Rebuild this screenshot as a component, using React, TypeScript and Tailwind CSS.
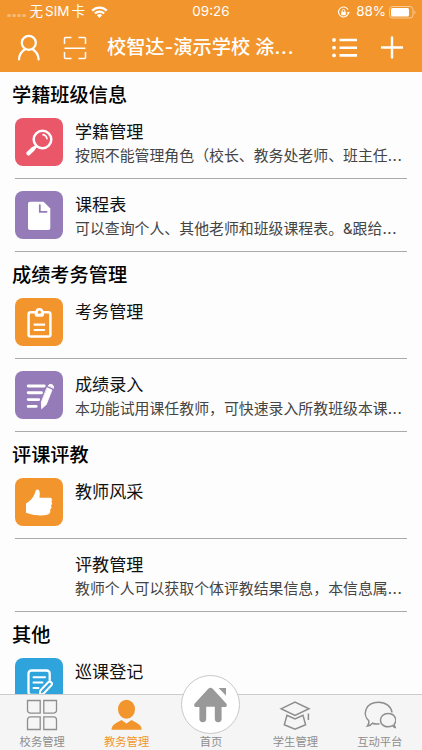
import type { ReactNode } from "react";

interface Item {
  title: string;
  desc?: string;
  color?: string;
  icon?: ReactNode;
}

interface Section {
  name: string;
  items: Item[];
}

const SearchIcon = () => (
  <svg viewBox="0 0 48 48" fill="none" stroke="#fff" strokeLinecap="round">
    <circle cx="27.5" cy="21.5" r="8.8" strokeWidth="2.5" />
    <path d="M28 16.6a5 5 0 0 1 4 4" strokeWidth="1.6" />
    <path d="M21.2 28l-2.4 2.4" strokeWidth="2.8" />
    <path d="M18.3 30.8L13.4 35.4" strokeWidth="4.2" />
  </svg>
);

const FileIcon = () => (
  <svg viewBox="0 0 48 48" fill="none">
    <path d="M15 10.7H28.6L35.3 17.4V37a2 2 0 0 1-2 2H15a2 2 0 0 1-2-2V12.7a2 2 0 0 1 2-2z" fill="#fff" />
    <path d="M24.8 14.2V20.8H31.6" stroke="#957bb8" strokeWidth="1.8" strokeLinecap="round" />
  </svg>
);

const ClipboardIcon = () => (
  <svg viewBox="0 0 48 48" fill="none" stroke="#fff" strokeLinecap="round">
    <rect x="13.6" y="14.2" width="21.8" height="24.2" rx="2" strokeWidth="2.5" />
    <path d="M19.7 13h9.3v3.8a2 2 0 0 1-2 2h-5.3a2 2 0 0 1-2-2z" fill="#fff" stroke="none" />
    <circle cx="24.4" cy="14" r="4" fill="#fff" stroke="none" />
    <circle cx="24.4" cy="14.2" r="1.6" fill="#f2952c" stroke="none" />
    <path d="M19.6 26.7h9.6M19.6 32h9.6" strokeWidth="2.2" />
  </svg>
);

const ScoreIcon = () => (
  <svg viewBox="0 0 48 48" fill="none" stroke="#fff" strokeLinecap="round">
    <path d="M13.2 15h16M13.2 21.8h13.3M13.2 28.6h10.5M13.2 35.4h8" strokeWidth="2.9" />
    <path d="M32.2 16.8L37 19 31.3 33.5 26.6 37.7 26.4 31.2z" fill="#fff" strokeWidth="0.8" strokeLinejoin="round" />
    <path d="M33.2 14.6a3 3 0 0 1 5.4 2.4z" fill="#fff" strokeWidth="0.8" />
  </svg>
);

const ThumbIcon = () => (
  <svg viewBox="0 0 48 48" fill="#fff">
    <path d="M11 25.4C14.5 23.5 18.2 20 19.8 15.5 20.3 13.5 20.8 11.3 22.5 11.4 25 11.6 25 14.5 24.5 19.8H35.2C37 19.8 37.5 22 36.3 23.4 37.6 24.6 37.3 26.7 35.9 27.5 36.9 28.9 36.5 30.9 35 31.6 35.9 33.6 35 35.8 32.8 36.4 28 37.9 21 37.5 18 36.8 15.5 36.2 13 35.5 11 34.8z" />
  </svg>
);

const NoteIcon = () => (
  <svg viewBox="0 0 48 48" fill="none" stroke="#fff" strokeLinecap="round" strokeLinejoin="round">
    <path d="M34.7 22V15.5a3 3 0 0 0-3-3H16.5a3 3 0 0 0-3 3V34a3 3 0 0 0 3 3H22" strokeWidth="2.3" />
    <path d="M18.5 19.3h11.5M18.5 24.6h9M18.5 30h5" strokeWidth="2" />
    <path d="M33.2 24.3a2.2 2.2 0 0 1 3.2 3L28.7 35.5 24.6 37 25.4 32.5z" strokeWidth="2" />
  </svg>
);

const sections: Section[] = [
  {
    name: "学籍班级信息",
    items: [
      {
        title: "学籍管理",
        desc: "按照不能管理角色（校长、教务处老师、班主任",
        color: "bg-[#e95769]",
        icon: <SearchIcon />,
      },
      {
        title: "课程表",
        desc: "可以查询个人、其他老师和班级课程表。&跟给",
        color: "bg-[#957bb8]",
        icon: <FileIcon />,
      },
    ],
  },
  {
    name: "成绩考务管理",
    items: [
      { title: "考务管理", color: "bg-[#f2952c]", icon: <ClipboardIcon /> },
      {
        title: "成绩录入",
        desc: "本功能试用课任教师，可快速录入所教班级本课",
        color: "bg-[#957bb8]",
        icon: <ScoreIcon />,
      },
    ],
  },
  {
    name: "评课评教",
    items: [
      { title: "教师风采", color: "bg-[#f2952c]", icon: <ThumbIcon /> },
      {
        title: "评教管理",
        desc: "教师个人可以获取个体评教结果信息，本信息属",
      },
    ],
  },
  {
    name: "其他",
    items: [{ title: "巡课登记", color: "bg-[#2fa4dc]", icon: <NoteIcon /> }],
  },
];

function StatusBar() {
  return (
    <div className="relative flex h-6 items-center justify-between pl-[7px] pr-[6px] text-[13.5px] leading-none">
      <div className="flex items-center">
        <div className="mt-[6px] mr-[4px] flex gap-[1.5px]">
          {[0, 1, 2, 3].map((i) => (
            <span key={i} className="h-[3px] w-[3.5px] rounded-full bg-white/35" />
          ))}
        </div>
        <span className="flex gap-[2px]">
          <span>无</span>
          <span>SIM</span>
          <span>卡</span>
        </span>
        <svg className="ml-[6px] h-[12px] w-[17px]" viewBox="0 0 17 12" fill="none" stroke="#fff" strokeWidth="2.2">
          <path d="M1.2 4.6a10.3 10.3 0 0 1 14.6 0" />
          <path d="M3.9 7.5a6.5 6.5 0 0 1 9.2 0" />
          <path d="M8.5 12L5.9 9.3a3.7 3.7 0 0 1 5.2 0z" fill="#fff" stroke="none" />
        </svg>
      </div>
      <span className="absolute inset-x-0 text-center">09:26</span>
      <div className="flex items-center">
        <svg className="mr-[6px] h-[13px] w-[13px]" viewBox="0 0 13 13" fill="none" stroke="#fff">
          <path d="M11 3.8a5 5 0 1 0 .5 2.6" strokeWidth="1.1" />
          <path d="M9.7 6h3.2L11.5 8.2z" fill="#fff" stroke="none" />
          <rect x="4.2" y="5.8" width="4.6" height="3.4" fill="#fff" stroke="none" />
          <path d="M5.2 6V4.8a1.3 1.3 0 0 1 2.6 0V6" strokeWidth="0.9" />
        </svg>
        <span className="tracking-[-0.1px]">88%</span>
        <svg className="ml-[3px] h-[13px] w-[27px]" viewBox="0 0 27 13" fill="none">
          <rect x="0.5" y="0.5" width="23.5" height="11.5" rx="3" stroke="#fff" strokeOpacity="0.5" />
          <rect x="2" y="2" width="18" height="8.5" rx="1.5" fill="#fff" />
          <path d="M25.4 4.5v3.8c1.4-.6 1.4-3.2 0-3.8z" fill="#fff" fillOpacity="0.5" />
        </svg>
      </div>
    </div>
  );
}

function Header() {
  return (
    <header className="h-[72px] shrink-0 bg-[#f2952c] text-white">
      <StatusBar />
      <div className="flex h-12 items-center pl-[17px] pr-[18px]">
        <svg className="h-7 w-6" viewBox="0 0 24 28" fill="none" stroke="#fff" strokeWidth="2.2" strokeLinecap="round">
          <circle cx="11.8" cy="8.8" r="7" />
          <path d="M2 25.5C2.3 20.5 4.6 17.3 8 15.3M21.6 25.5C21.3 20.5 19 17.3 15.6 15.3" />
        </svg>
        <svg className="ml-[22px] h-6 w-6" viewBox="0 0 24 24" fill="none" stroke="#fff" strokeWidth="1.5">
          <path d="M8.5 1.5H2.5a1 1 0 0 0-1 1V8M15.5 1.5h6a1 1 0 0 1 1 1V8M1.5 16v5.5a1 1 0 0 0 1 1h6M22.5 16v5.5a1 1 0 0 1-1 1h-6M1.5 12.2h21" />
        </svg>
        <h1 className="ml-[20px] flex-1 whitespace-nowrap text-[19.2px] font-medium leading-none">
          校智达-演示学校 涂<span className="tracking-[0.8px]">...</span>
        </h1>
        <svg className="h-5 w-[25px]" viewBox="0 0 25 20" fill="none" stroke="#fff" strokeWidth="2.6">
          <path d="M7.5 2H25M7.5 9.7H25M7.5 17.4H25" />
          <g fill="#fff" stroke="none">
            <circle cx="2" cy="2" r="1.9" />
            <circle cx="2" cy="9.7" r="1.9" />
            <circle cx="2" cy="17.4" r="1.9" />
          </g>
        </svg>
        <svg className="ml-[23px] h-6 w-6" viewBox="0 0 24 24" stroke="#fff" strokeWidth="2.4">
          <path d="M1 11.5h22M12 .5v22" />
        </svg>
      </div>
    </header>
  );
}

function Row({ item }: { item: Item }) {
  return (
    <div className="mx-[15px] flex h-[73px] border-b border-[#aaa] pt-3">
      <div className={`h-12 w-12 shrink-0 overflow-hidden rounded-[8px] ${item.color ?? ""}`}>{item.icon}</div>
      <div className="ml-3 whitespace-nowrap pt-[3px]">
        <h3 className="text-[17.1px] leading-[22px] text-[#111]">{item.title}</h3>
        {item.desc && (
          <p className="mt-[2px] text-[14.9px] leading-[22px] text-[#444]">
            {item.desc}
            <span className="tracking-[0.6px]">...</span>
          </p>
        )}
      </div>
    </div>
  );
}

function Tab({ label, active, children }: { label: string; active?: boolean; children?: ReactNode }) {
  return (
    <div className={`flex flex-1 flex-col items-center ${active ? "text-[#f2952c]" : "text-[#8e8e8e]"}`}>
      <div className="flex h-[39px] items-end justify-center pb-[3px]">{children}</div>
      <span className="text-[11.3px] leading-[16px]">{label}</span>
    </div>
  );
}

function TabBar() {
  return (
    <nav className="relative flex h-14 shrink-0 border-t border-[#ccc] bg-[#f5f5f5]">
      <Tab label="校务管理">
        <svg className="h-8 w-8" viewBox="0 0 32 32" fill="none" stroke="currentColor" strokeWidth="1.3">
          <path d="M1.5 1.5H14.2V14.2H4.5a3 3 0 0 1-3-3zM17.8 1.5H30.5V11.2a3 3 0 0 1-3 3H17.8zM4.5 17.8H14.2V30.5H1.5V20.8a3 3 0 0 1 3-3zM17.8 17.8H27.5a3 3 0 0 1 3 3V30.5H17.8z" />
        </svg>
      </Tab>
      <Tab label="教务管理" active>
        <svg className="h-8 w-8" viewBox="0 0 32 32" fill="currentColor">
          <ellipse cx="15.5" cy="10.3" rx="8.5" ry="9.5" />
          <path d="M.5 30.7C.8 25.5 4.5 24.5 10.5 21L15.5 24.5 20.5 21C26.5 24.5 30.5 25.5 30.7 30.7z" />
        </svg>
      </Tab>
      <Tab label="首页" />
      <Tab label="学生管理">
        <svg className="h-8 w-8" viewBox="0 0 32 32" fill="none" stroke="currentColor" strokeWidth="1.5">
          <path d="M2 9.8L16 3 30 9.8 16 16.5z" />
          <path d="M8 16.2L5.3 25.8 16 30.2 26.6 25.8 24 16.2 16 20z" />
          <path d="M29.4 14.5V21" />
        </svg>
      </Tab>
      <Tab label="互动平台">
        <svg className="h-8 w-8" viewBox="0 0 32 32" fill="none" stroke="currentColor" strokeWidth="1.5">
          <path d="M15.5 24.8C12.5 25.3 10 24.8 8.5 24.2 7.5 25.8 6 26.7 3.5 27 4.8 25.5 5.2 23.8 4.8 21.8-1.5 16.5.5 3.2 14.5 3.2 22 3.2 27.2 7.5 28 13.5" />
          <path d="M31.3 28.5C30 28.2 29.2 27.5 28.7 26.6 22.5 29.5 16.5 26.5 16.5 21 16.5 17.5 19.5 14.5 24 14.5 31.5 14.5 33.5 21.5 30.2 25.2 30.2 26.5 30.6 27.5 31.3 28.5z" />
        </svg>
      </Tab>
      {/* raised home button */}
      <div className="absolute left-[181px] top-[-20px] flex h-[59px] w-[59px] items-center justify-center rounded-full border border-[#c8c8c8] bg-white">
        <svg className="h-9 w-9" viewBox="0 0 36 36" fill="#999">
          <path d="M15.3 1.8Q17.5-.4 19.7 1.8L33 16.2C34.6 18.2 33.8 20 31.8 20H28.6V31.8a3.4 3.4 0 0 1-6.8 0V19.8H13.2V31.8a3.4 3.4 0 0 1-6.8 0V20H3.200C1.2 20 .4 18.2 2 16.200z" />
          <path d="M25.6 1h7.4v7.5z" />
        </svg>
      </div>
    </nav>
  );
}

export default function App() {
  return (
    <div
      lang="zh-CN"
      className="flex h-[750px] w-[422px] flex-col overflow-hidden bg-[#fdfdfd] font-['Inter','Noto_Sans_CJK_SC',sans-serif]"
    >
      <Header />
      <main className="min-h-0 flex-1 overflow-hidden">
        {sections.map((section) => (
          <section key={section.name}>
            <h2 className="h-[34px] pl-3 pt-[11px] text-[19.2px] font-medium leading-[24px] text-black">
              {section.name}
            </h2>
            {section.items.map((item) => (
              <Row key={item.title} item={item} />
            ))}
          </section>
        ))}
      </main>
      <TabBar />
    </div>
  );
}
